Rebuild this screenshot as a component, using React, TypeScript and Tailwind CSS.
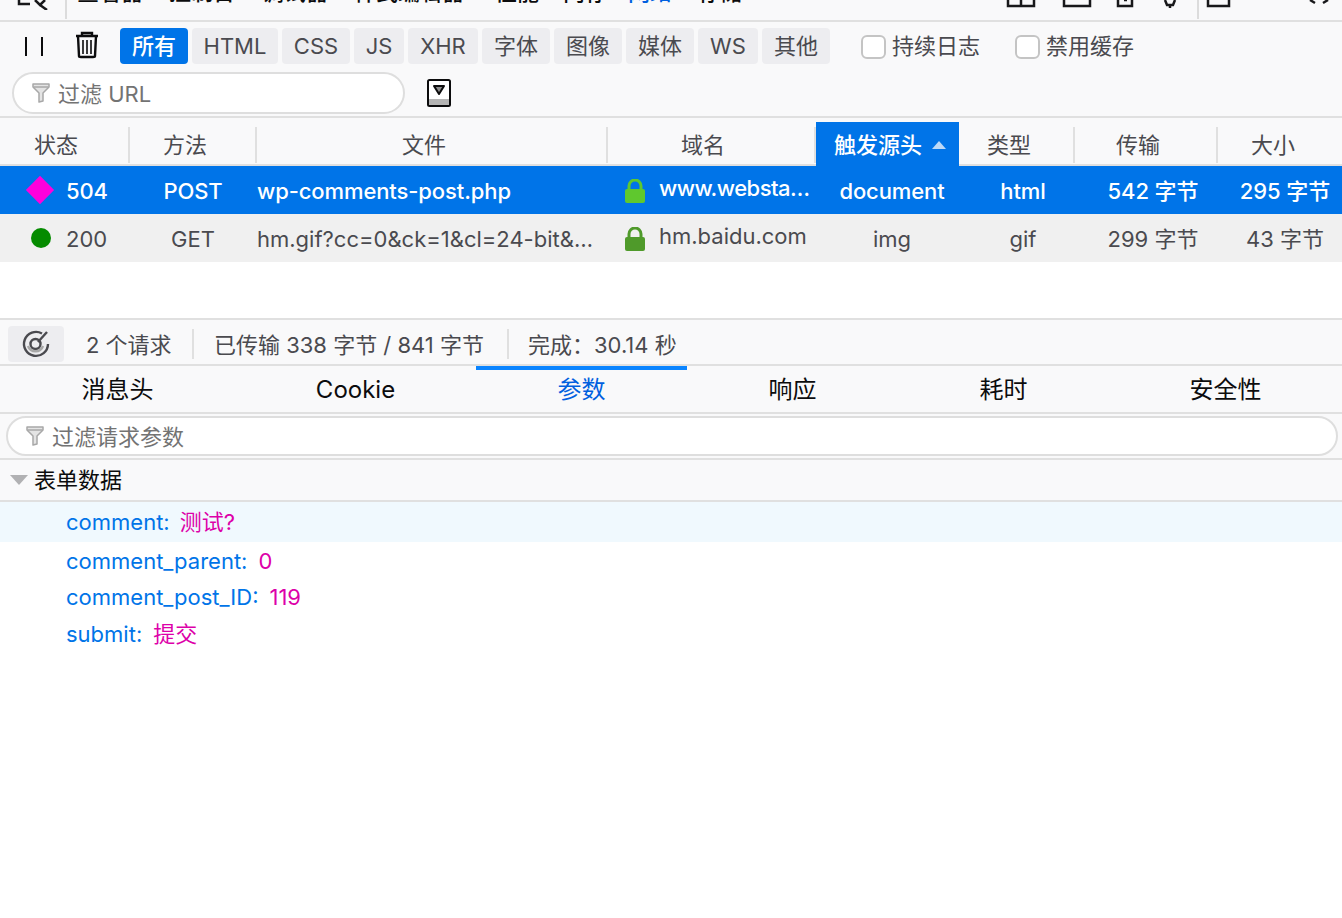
import React from "react";

const font = "font-['Inter','Noto_Sans_CJK_SC',sans-serif]";

const filters = [
  { label: "所有", width: "w-[68px]", active: true },
  { label: "HTML", width: "w-[86px]" },
  { label: "CSS", width: "w-[68px]" },
  { label: "JS", width: "w-[50px]" },
  { label: "XHR", width: "w-[70px]" },
  { label: "字体", width: "w-[68px]" },
  { label: "图像", width: "w-[68px]" },
  { label: "媒体", width: "w-[68px]" },
  { label: "WS", width: "w-[60px]" },
  { label: "其他", width: "w-[68px]" },
];

const headers = [
  { label: "状态", className: "w-[130px] pl-[34px]" },
  { label: "方法", className: "w-[127px] pl-[33px]" },
  { label: "文件", className: "w-[351px] pl-[145px]" },
  { label: "域名", className: "w-[208px] pl-[73px]" },
];

const headersRight = [
  { label: "类型", className: "w-[116px] pl-[28px] border-r-2 border-[#e0e0e0]" },
  { label: "传输", className: "w-[143px] pl-[41px] border-r-2 border-[#e0e0e0]" },
  { label: "大小", className: "flex-1 pl-[33px]" },
];

const tabs = [
  { label: "消息头", className: "w-[235px]" },
  { label: "Cookie", className: "w-[241px]" },
  { label: "参数", className: "w-[211px]", active: true },
  { label: "响应", className: "w-[211px]" },
  { label: "耗时", className: "w-[211px]" },
  { label: "安全性", className: "flex-1" },
];

const params = [
  { name: "comment_parent:", value: "0" },
  { name: "comment_post_ID:", value: "119" },
  { name: "submit:", value: "提交" },
];

const Funnel = () => (
  <svg width="18" height="20" viewBox="0 0 18 20" className="shrink-0">
    <path d="M1 1h16v3l-6 6v8l-4 1v-9L1 4z" fill="#e4e4e4" stroke="#a8a8a8" strokeWidth="1.5" strokeLinejoin="round" />
    <path d="M1.5 4h15" stroke="#a8a8a8" strokeWidth="1.5" />
  </svg>
);

const Lock = ({ color }: { color: string }) => (
  <svg width="20" height="24" viewBox="0 0 20 24" className="shrink-0">
    <path d="M4 11V7a6 6 0 0 1 12 0v4" fill="none" stroke={color} strokeWidth="3" />
    <rect x="0" y="10" width="20" height="14" rx="2" fill={color} />
  </svg>
);

const Checkbox = ({ label }: { label: string }) => (
  <div className="flex items-center gap-[6px] pt-[1px]">
    <span className="h-[24px] w-[25px] rounded-[6px] border-2 border-[#c4c4c4] bg-white" />
    <span className="text-[22px] text-[#4a4a4f]">{label}</span>
  </div>
);

const Row = ({
  selected,
  status,
  method,
  file,
  domain,
  type,
  kind,
  sent,
  size,
}: {
  selected?: boolean;
  status: string;
  method: string;
  file: string;
  domain: string;
  type: string;
  kind: string;
  sent: string;
  size: string;
}) => (
  <div
    className={`flex h-[48px] items-center pt-[2px] text-[22px] ${
      selected ? "bg-[#0074e8] font-medium tracking-[-0.1px] text-white" : "bg-[#f0f0f0] text-[#4a4a4f]"
    }`}
  >
    <div className="flex w-[130px] items-center">
      <div className="mb-[2px] flex w-[66px] justify-center pl-[14px]">
        {selected ? (
          <span className="h-[20px] w-[20px] rotate-45 bg-[#ff00dc]" />
        ) : (
          <span className="ml-[1px] h-[20px] w-[20px] rounded-full bg-[#058b00]" />
        )}
      </div>
      <span>{status}</span>
    </div>
    <div className="w-[126px] text-center">{method}</div>
    <div className="w-[369px] truncate pl-[1px] pr-[20px]">{file}</div>
    <div className="flex w-[193px] items-center">
      <Lock color={selected ? "#5fc82e" : "#4f9a2a"} />
      <span className={`mb-[6px] w-[173px] truncate pl-[14px] ${selected ? "tracking-[-0.5px]" : ""}`}>{domain}</span>
    </div>
    <div className="w-[148px] text-center">{type}</div>
    <div className="w-[114px] text-center">{kind}</div>
    <div className="w-[146px] text-center">{sent}</div>
    <div className="flex-1 pl-[2px] text-center">{size}</div>
  </div>
);

export default function App() {
  return (
    <div className={`${font} h-[918px] w-[1342px] overflow-hidden bg-white text-[22px]`}>
      {/* top tabs, cut by the screenshot */}
      <div className="flex h-[22px] items-start overflow-hidden border-b-2 border-[#e0e0e0] bg-[#f9f9fa]">
        <svg width="36" height="10" viewBox="0 0 36 10" className="ml-[16px] shrink-0">
          <path d="M3 0v4h11M19 0l5 5 5-5M24 5l7 5" fill="none" stroke="#18181a" strokeWidth="2.5" />
        </svg>
        <span className="ml-[13px] h-[19px] w-[2px] bg-[#dcdcdc]" />
        <div className="ml-[10px] flex h-[20px] w-[720px] items-end overflow-hidden pb-[11px] font-medium text-[#0c0c0d]">
          <span className="w-[92px] shrink-0">查看器</span>
          <span className="w-[93px] shrink-0">控制台</span>
          <span className="w-[92px] shrink-0">调试器</span>
          <span className="w-[141px] shrink-0">样式编辑器</span>
          <span className="w-[68px] shrink-0">性能</span>
          <span className="w-[65px] shrink-0">内存</span>
          <span className="w-[70px] shrink-0 text-[#0060df]">网络</span>
          <span className="shrink-0">存储</span>
        </div>
        <svg width="342" height="20" viewBox="0 0 342 20" className="ml-[200px] shrink-0" fill="none" stroke="#18181a" strokeWidth="2.5">
          <path d="M11 0v6h26V0M24 0v6" />
          <path d="M67 0v6h26V0" />
          <path d="M121 0v6h14V0M127 0h3" />
          <path d="M168 0l2 5h6l2-5M173 5v3" />
          <path d="M211 0v6h21V0" />
          <path d="M313 0l5 3M331 0l-5 3" />
          <path d="M201 0v19" stroke="#dcdcdc" strokeWidth="2" />
        </svg>
      </div>

      {/* toolbar */}
      <div className="h-[96px] border-b-2 border-[#e0e0e0] bg-[#f9f9fa]">
        <div className="h-[48px] pt-[6px]">
          <div className="flex h-[36px] items-center">
            <svg width="120" height="36" viewBox="0 0 120 36" className="shrink-0" fill="none" stroke="#0c0c0d">
              <path d="M26 9v19M42 9v19" strokeWidth="2" />
              <path d="M76 8h22M82 8V5h10v3M78 8l1 20q0 1 2 1h12q2 0 2-1l1-20" strokeWidth="2.4" />
              <path d="M83 12v14M87 12v14M91 12v14" strokeWidth="1.6" />
            </svg>
            <div className="flex gap-[4px]">
              {filters.map((f) => (
                <div
                  key={f.label}
                  className={`flex h-[36px] items-center justify-center rounded-[4px] ${f.width} ${
                    f.active ? "bg-[#0074e8] font-medium text-white" : "bg-[#ededf0] text-[#4a4a4f]"
                  }`}
                >
                  {f.label}
                </div>
              ))}
            </div>
            <div className="ml-[31px]">
              <Checkbox label="持续日志" />
            </div>
            <div className="ml-[35px]">
              <Checkbox label="禁用缓存" />
            </div>
          </div>
        </div>
        <div className="flex items-center pl-[12px] pt-[2px]">
          <div className="flex h-[42px] w-[393px] items-center gap-[8px] rounded-full border-2 border-[#dedede] bg-white pl-[18px] text-[#737373]">
            <Funnel />
            <span className="pt-[2px]">过滤 URL</span>
          </div>
          <svg width="24" height="28" viewBox="0 0 24 28" className="ml-[22px] shrink-0">
            <rect x="1" y="1" width="22" height="26" rx="1.5" fill="#fff" stroke="#0c0c0d" strokeWidth="2" />
            <rect x="2" y="20" width="20" height="6" fill="#b4b4b4" />
            <path d="M7 7h10l-5 8z" fill="#8c8c8c" stroke="#0c0c0d" strokeWidth="2" strokeLinejoin="round" />
          </svg>
        </div>
      </div>

      {/* table header */}
      <div className="flex h-[48px] border-b-2 border-[#e0e0e0] bg-[#f9f9fa] text-[#4a4a4f]">
        {headers.map((h) => (
          <div key={h.label} className={`mt-[9px] flex h-[36px] items-center border-r-2 border-[#e0e0e0] leading-none ${h.className}`}>
            {h.label}
          </div>
        ))}
        <div className="relative z-10 mt-[4px] flex h-[46px] w-[143px] shrink-0 items-center gap-[10px] bg-[#0074e8] pl-[18px] font-medium text-white">
          <span>触发源头</span>
          <span className="h-0 w-0 border-x-[7px] border-b-[8px] border-x-transparent border-b-[#bcd9f7]" />
        </div>
        {headersRight.map((h) => (
          <div key={h.label} className={`mt-[9px] flex h-[36px] items-center leading-none ${h.className}`}>
            {h.label}
          </div>
        ))}
      </div>

      <Row
        selected
        status="504"
        method="POST"
        file="wp-comments-post.php"
        domain="www.webstack.cc"
        type="document"
        kind="html"
        sent="542 字节"
        size="295 字节"
      />
      <Row
        status="200"
        method="GET"
        file="hm.gif?cc=0&ck=1&cl=24-bit&ds=1440x900"
        domain="hm.baidu.com"
        type="img"
        kind="gif"
        sent="299 字节"
        size="43 字节"
      />

      <div className="h-[56px] bg-white" />

      {/* status bar */}
      <div className="flex h-[48px] items-center border-y-2 border-[#e0e0e0] bg-[#f9f9fa] pl-[8px] pt-[4px] text-[#4a4a4f]">
        <div className="flex h-[36px] w-[56px] items-center justify-center rounded-[4px] bg-[#ededf0]">
          <svg width="30" height="30" viewBox="0 0 30 30" fill="none" stroke="#4a4a4f" strokeWidth="2.4">
            <path d="M21 4.5A12 12 0 1 0 27 15" />
            <circle cx="14.5" cy="15" r="5" />
            <path d="M17 13L26 3" />
            <path d="M7 17a8 8 0 0 0 15 0" stroke="#a8a8a8" />
          </svg>
        </div>
        <span className="ml-[22px] w-[106px] pt-[2px]">2 个请求</span>
        <span className="h-[30px] w-[2px] bg-[#e0e0e0]" />
        <span className="ml-[20px] w-[293px] pt-[2px]">已传输 338 字节 / 841 字节</span>
        <span className="h-[30px] w-[2px] bg-[#e0e0e0]" />
        <span className="ml-[19px] pt-[2px]">完成：30.14 秒</span>
      </div>

      {/* detail tabs */}
      <div className="flex h-[48px] border-b-2 border-[#e0e0e0] bg-[#f9f9fa] text-[24px]">
        {tabs.map((t) => (
          <div
            key={t.label}
            className={`flex items-center justify-center border-t-4 pb-[2px] ${t.className} ${
              t.active ? "border-[#0a84ff] text-[#0060df]" : "border-transparent text-[#0c0c0d]"
            }`}
          >
            {t.label}
          </div>
        ))}
      </div>

      {/* params filter */}
      <div className="flex h-[46px] items-center border-b-2 border-[#e0e0e0] bg-[#f9f9fa] pl-[6px] pr-[4px]">
        <div className="flex h-[40px] w-full items-center gap-[8px] rounded-full border-2 border-[#dedede] bg-white pl-[18px] text-[#737373]">
          <Funnel />
          <span className="pt-[2px]">过滤请求参数</span>
        </div>
      </div>

      {/* form data */}
      <div className="flex h-[42px] items-center border-b-2 border-[#e0e0e0] bg-[#f9f9fa] pl-[10px] text-[#0c0c0d]">
        <span className="h-0 w-0 border-x-[9px] border-t-[10px] border-x-transparent border-t-[#b1b1b3]" />
        <span className="ml-[6px]">表单数据</span>
      </div>
      <div className="flex h-[40px] items-center gap-[10px] bg-[#f0f9fe] pl-[66px]">
        <span className="text-[#0074e8]">comment:</span>
        <span className="text-[#dd00a9]">测试?</span>
      </div>
      <div className="pt-[1px]">
        {params.map((p) => (
          <div key={p.name} className="flex h-[36.5px] items-center gap-[11px] pl-[66px]">
            <span className="text-[#0074e8]">{p.name}</span>
            <span className="text-[#dd00a9]">{p.value}</span>
          </div>
        ))}
      </div>
    </div>
  );
}
